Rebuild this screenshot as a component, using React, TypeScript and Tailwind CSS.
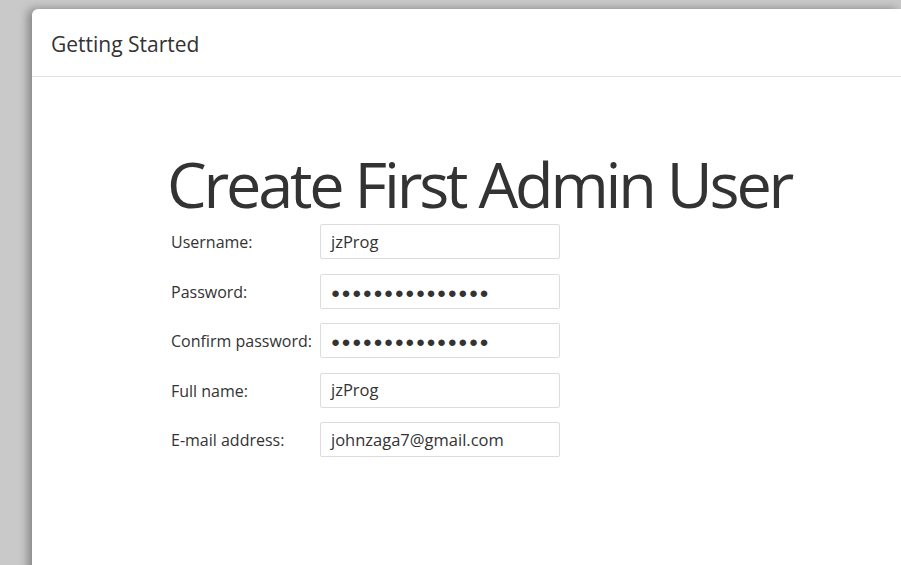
const rows = [
  { label: "Username:", value: "jzProg" },
  { label: "Password:", value: "", secret: true },
  { label: "Confirm password:", value: "", secret: true },
  { label: "Full name:", value: "jzProg" },
  { label: "E-mail address:", value: "johnzaga7@gmail.com" },
];

function Field({ value, secret }: { value: string; secret?: boolean }) {
  return (
    <div className="flex h-[35px] w-[240px] items-center rounded-[2px] border border-[#dcdcdc] bg-white px-[10px]">
      {secret ? (
        <span className="pt-[2px] text-[15px] tracking-[1.55px] text-[#333]">{"●".repeat(15)}</span>
      ) : (
        <span className="pt-[1px] text-[16.5px] text-[#333]">{value}</span>
      )}
    </div>
  );
}

export default function App() {
  return (
    <div className="h-[565px] w-full overflow-hidden bg-[#c9c9c9] pl-[32px] pt-[9px] font-['Open_Sans',sans-serif]">
      <div className="h-[600px] rounded-tl-[6px] bg-white shadow-[-4px_0_10px_rgba(0,0,0,0.35)]">
        <div className="flex h-[68px] items-center border-b border-[#e2e2e2] pl-[19px]">
          <h2 className="pt-[5px] text-[21px] text-[#333]">Getting Started</h2>
        </div>
        <div className="pl-[135px] pt-[75px]">
          <h1 className="text-[63px] leading-[1] tracking-[-3.2px] text-[#333]">Create First Admin User</h1>
          <div className="mt-[9px] flex flex-col gap-[14.5px] pl-[4px]">
            {rows.map((r) => (
              <div key={r.label} className="flex items-start">
                <div className="w-[149px] pt-[6px] text-[16px] text-[#333]">{r.label}</div>
                <Field value={r.value} secret={r.secret} />
              </div>
            ))}
          </div>
        </div>
      </div>
    </div>
  );
}
